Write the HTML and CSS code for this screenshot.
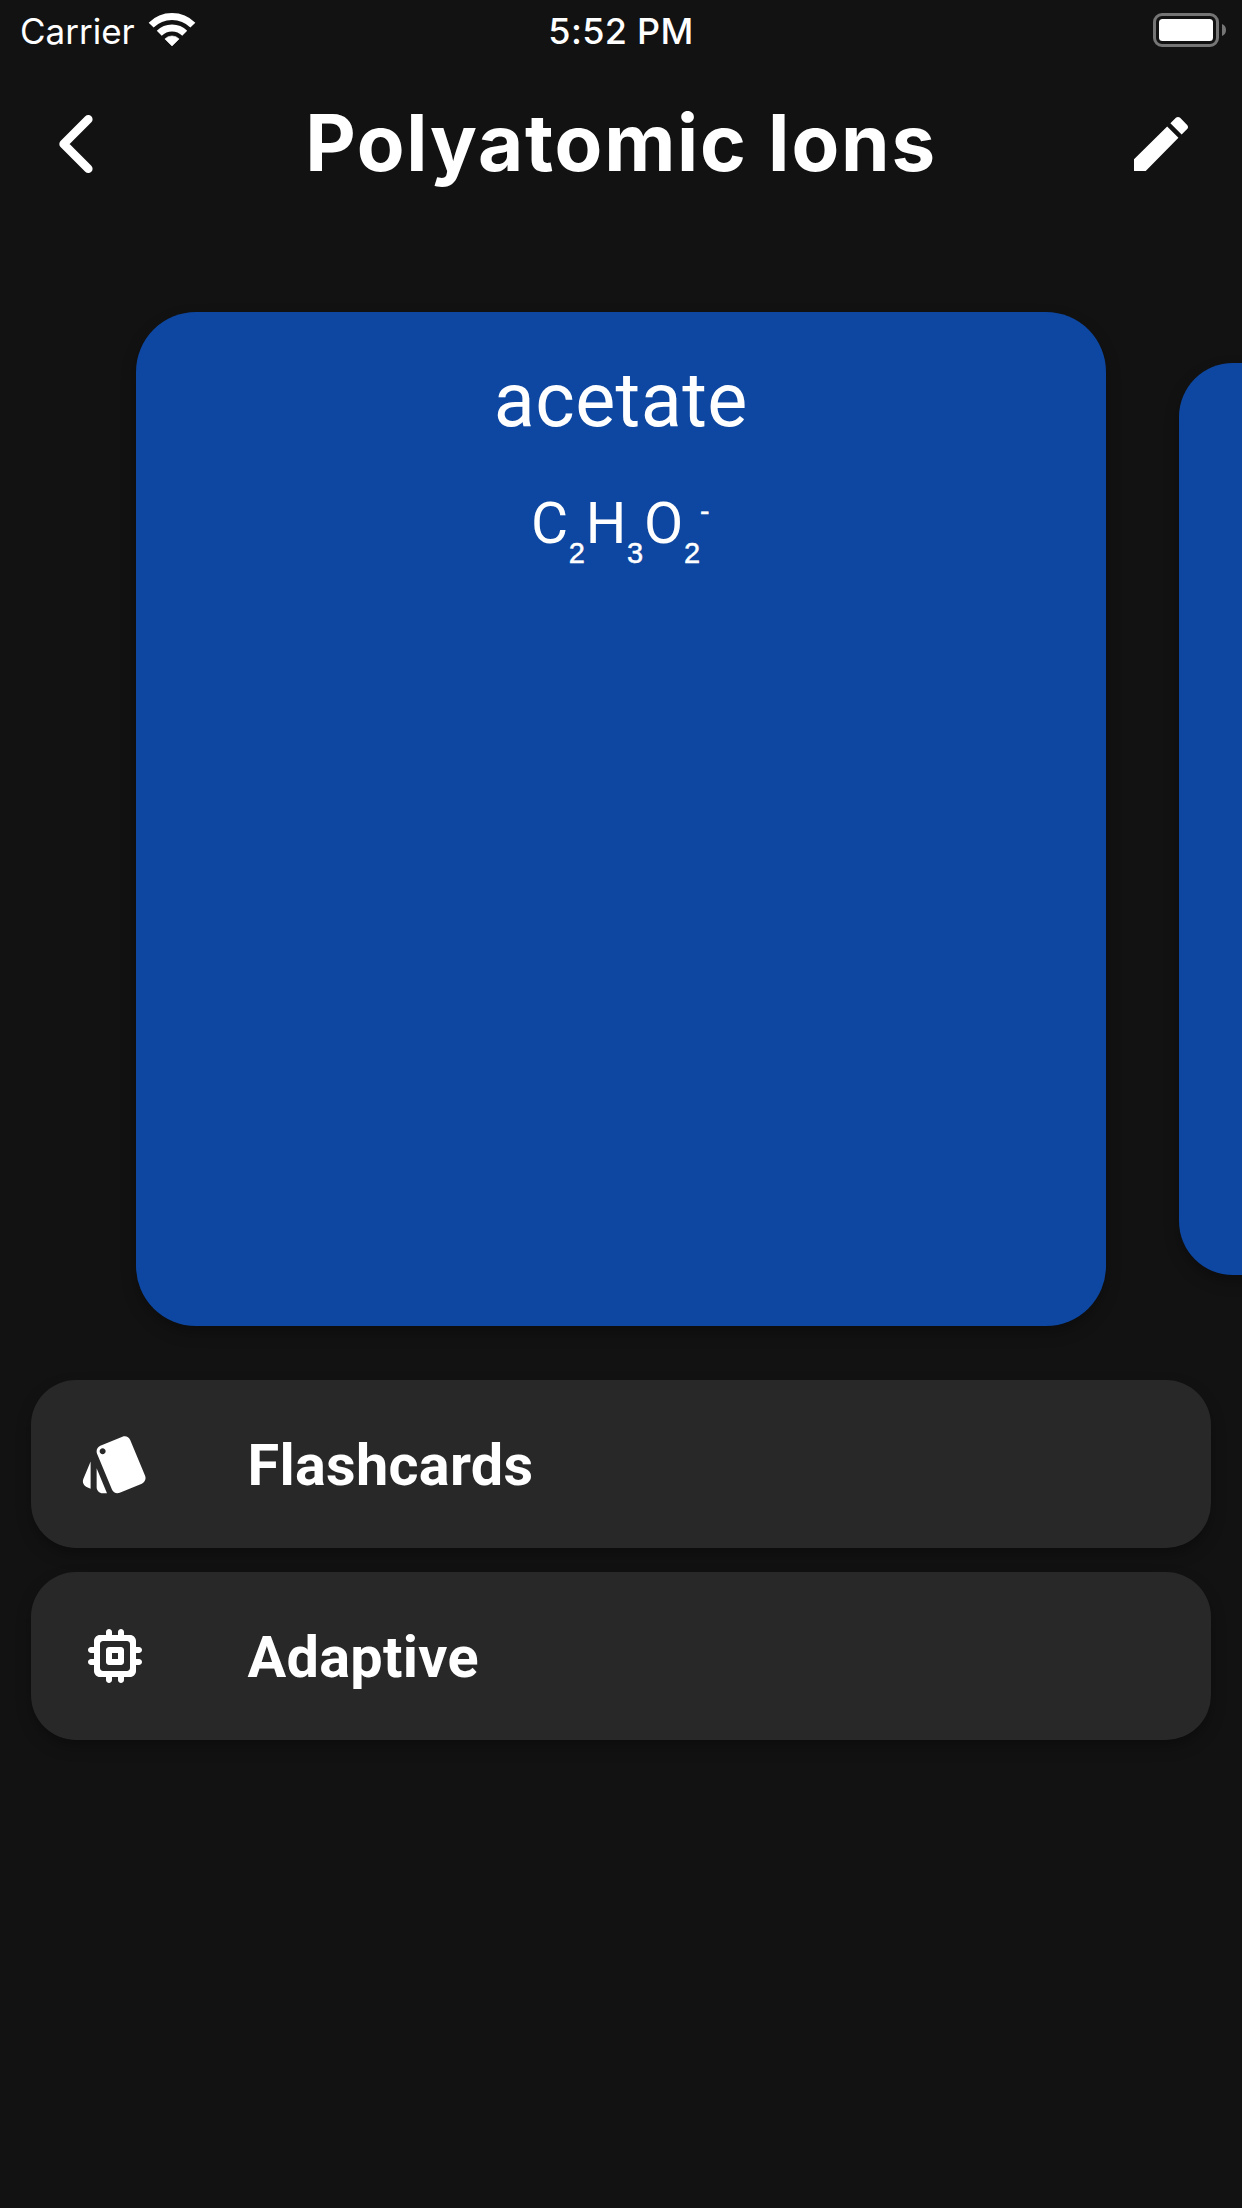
FILE: index.html
```html
<!DOCTYPE html>
<html lang="en">
<head>
  <meta charset="utf-8">
  <title>Polyatomic Ions</title>
  <link rel="stylesheet" href="styles.css">
</head>
<body>
  <div class="status-bar">
    <div class="status-left">
      <span class="carrier">Carrier</span>
      <svg class="wifi" viewBox="0 0 48 36" aria-hidden="true">
        <path d="M3.14 13.14A29.5 29.5 0 0 1 44.86 13.14M11.27 21.27A18 18 0 0 1 36.73 21.27" fill="none" stroke="#fff" stroke-width="7"/>
        <path d="M24 34L16.9 26.9A10 10 0 0 1 31.1 26.9Z" fill="#fff" stroke="#fff" stroke-width=".6" stroke-linejoin="round"/>
      </svg>
    </div>
    <span class="clock">5:52 PM</span>
    <div class="status-right">
      <svg class="battery" viewBox="0 0 74 34" aria-hidden="true">
        <rect x="1.5" y="1.5" width="63" height="31" rx="7.5" fill="none" stroke="#757575" stroke-width="3"/>
        <rect x="6" y="6" width="54" height="22" rx="3.5" fill="#fff"/>
        <path d="M69 11c2.6 1 4 3.3 4 6s-1.400 5-4 6z" fill="#757575"/>
      </svg>
    </div>
  </div>

  <header class="app-bar">
    <svg class="icon-back" viewBox="0 0 72 72" aria-label="Back">
      <path d="M52.300 11.300L27.600 36L52.300 60.700" fill="none" stroke="#fff" stroke-width="8.600" stroke-linecap="round" stroke-linejoin="round"/>
    </svg>
    <h1 class="title">Polyatomic Ions</h1>
    <svg class="icon" viewBox="0 0 24 24" aria-label="Edit">
      <path d="M3 17.100v3.700q0 .2.2.2h3.700L17.810 9.940l-3.750-3.750zM20.710 7.040c.39-.39.39-1.020 0-1.410l-2.340-2.340c-.39-.39-1.020-.39-1.410 0l-1.830 1.830 3.750 3.750 1.830-1.830z"/>
    </svg>
  </header>

  <main>
    <section class="carousel">
      <article class="card">
        <h2 class="term">acetate</h2>
        <p class="formula">C<span class="sub">2</span>H<span class="sub">3</span>O<span class="sub">2</span><span class="sup">-</span></p>
      </article>
      <article class="card card-next"></article>
    </section>

    <nav class="modes">
      <div class="mode">
        <svg class="icon" viewBox="0 0 24 24" aria-hidden="true">
          <path d="M2.530 19.650l1.340.56v-9.030l-2.430 5.860c-.41 1.020.08 2.190 1.090 2.610zm19.500-3.700L17.070 3.980c-.31-.75-1.040-1.210-1.810-1.230-.26 0-.53.04-.79.15L7.100 5.950c-.75.31-1.210 1.030-1.230 1.800-.01.27.04.54.15.8l4.960 11.970c.31.76 1.050 1.220 1.830 1.230.26 0 .52-.05.77-.15l7.360-3.050c1.020-.42 1.510-1.590 1.090-2.600zM7.880 8.750c-.55 0-1-.45-1-1s.45-1 1-1 1 .45 1 1-.45 1-1 1zm-2 11c0 1.100.9 2 2 2h1.450l-3.450-8.340v6.340z"/>
        </svg>
        <span class="mode-name">Flashcards</span>
      </div>
      <div class="mode">
        <svg class="icon" viewBox="0 0 24 24" aria-hidden="true">
          <path d="M14 9h-4c-.55 0-1 .45-1 1v4c0 .55.45 1 1 1h4c.55 0 1-.45 1-1v-4c0-.55-.45-1-1-1zm-1 4h-2v-2h2v2zm8-3c0-.55-.45-1-1-1h-1V7c0-1.100-.9-2-2-2h-2V4c0-.55-.45-1-1-1s-1 .45-1 1v1h-2V4c0-.55-.45-1-1-1s-1 .45-1 1v1H7c-1.100 0-2 .9-2 2v2H4c-.55 0-1 .45-1 1s.45 1 1 1h1v2H4c-.55 0-1 .45-1 1s.45 1 1 1h1v2c0 1.100.9 2 2 2h2v1c0 .55.45 1 1 1s1-.45 1-1v-1h2v1c0 .55.45 1 1 1s1-.45 1-1v-1h2c1.100 0 2-.9 2-2v-2h1c.55 0 1-.45 1-1s-.45-1-1-1h-1v-2h1c.55 0 1-.45 1-1zm-5 7H8c-.55 0-1-.45-1-1V8c0-.55.45-1 1-1h8c.55 0 1 .45 1 1v8c0 .55-.45 1-1 1z"/>
        </svg>
        <span class="mode-name">Adaptive</span>
      </div>
    </nav>
  </main>
</body>
</html>
```
FILE: styles.css
```css
* {
  box-sizing: border-box;
}

body {
  margin: 0;
  min-height: 2208px;
  overflow: hidden;
  background: #121212;
  color: #fff;
  font-family: Roboto, "Liberation Sans", sans-serif;
}

h1, h2, p {
  margin: 0;
  font-weight: 400;
}

svg {
  display: block;
  flex: none;
}

.status-bar {
  display: grid;
  grid-template-columns: 1fr auto 1fr;
  align-items: center;
  height: 60px;
  padding: 2px 15px 0 20px;
  font-family: Inter, "Liberation Sans", sans-serif;
  line-height: 44px;
}

.status-left {
  display: flex;
  align-items: center;
  gap: 13px;
}

.carrier {
  font-size: 35px;
}

.wifi {
  width: 48px;
  height: 36px;
  margin-bottom: 2px;
}

.clock {
  margin-right: 5px;
  font-size: 36px;
  font-weight: 500;
  letter-spacing: 0.3px;
}

.status-right {
  display: flex;
  justify-content: flex-end;
}

.battery {
  width: 74px;
  height: 34px;
  margin-bottom: 2px;
}

.app-bar {
  display: flex;
  align-items: center;
  justify-content: space-between;
  height: 168px;
  padding: 0 45px 0 36px;
}

.icon,
.icon-back {
  width: 72px;
  height: 72px;
}

.icon {
  fill: #fff;
}

.title {
  padding: 0 0 3px 9px;
  font-family: Inter, "Liberation Sans", sans-serif;
  font-size: 78px;
  font-weight: 700;
  line-height: 96px;
  letter-spacing: 1.75px;
}

.carousel {
  display: flex;
  align-items: center;
  gap: 73.5px;
  padding: 84px 0 54px 136px;
  overflow: hidden;
}

.card {
  flex: none;
  width: 969.5px;
  height: 1014px;
  padding-top: 44px;
  border-radius: 60px;
  background: #0d47a1;
  box-shadow: 0 7px 16px -2px rgba(0, 0, 0, 0.35);
  text-align: center;
}

.card-next {
  width: 872px;
  height: 912px;
  border-radius: 54px;
}

.term {
  font-size: 75.5px;
  line-height: 88px;
  letter-spacing: 0.4px;
}

.formula {
  margin-top: 46px;
  padding-right: 1px;
  font-size: 57px;
  line-height: 68px;
  letter-spacing: 0.75px;
}

.sub,
.sup {
  position: relative;
  font-family: "Liberation Sans", sans-serif;
  font-size: 29px;
  line-height: 0;
  -webkit-text-stroke: 0.5px #fff;
}

.sub {
  top: 20px;
}

.sup {
  top: -21px;
  font-family: Roboto, sans-serif;
}

.modes {
  display: flex;
  flex-direction: column;
  gap: 24px;
  padding: 0 31px;
}

.mode {
  display: flex;
  align-items: center;
  gap: 96.5px;
  height: 168px;
  padding: 0 48px;
  border-radius: 45px;
  background: #282828;
  box-shadow: 0 7px 16px -2px rgba(0, 0, 0, 0.35);
}

.mode-name {
  padding-top: 4px;
  font-size: 57.6px;
  font-weight: 700;
  line-height: 68px;
  letter-spacing: 0.3px;
}
```
